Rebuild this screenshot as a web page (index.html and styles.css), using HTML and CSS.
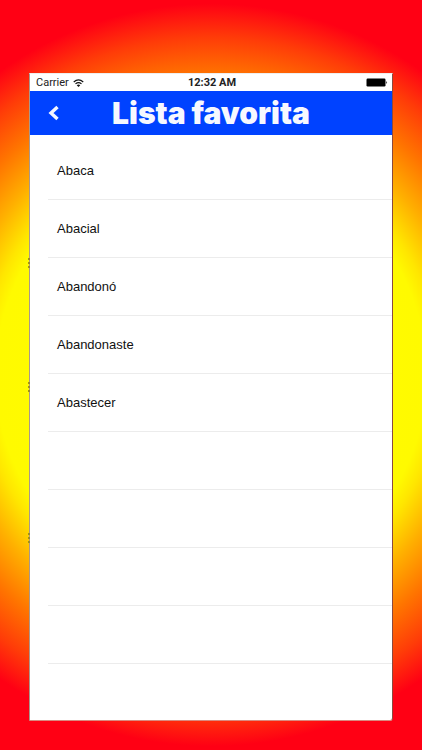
FILE: index.html
```html
<!DOCTYPE html>
<html lang="es">
<head>
  <meta charset="UTF-8">
  <meta name="viewport" content="width=device-width, initial-scale=1.0">
  <title>Lista favorita</title>
  <link rel="stylesheet" href="styles.css">
</head>
<body>

  <div class="screen">
    <div class="status">
      <div class="carrier">
        <span>Carrier</span>
        <svg class="wifi" width="11" height="8" viewBox="0 0 22 16" aria-hidden="true">
          <path d="M1.5 6 Q11 -2.5 20.5 6 M5 9.8 Q11 4.6 17 9.8" fill="none" stroke="#111" stroke-width="2.4"/>
          <path d="M7.5 12.4 Q11 9.8 14.5 12.4 L11 16 Z" fill="#111"/>
        </svg>
      </div>
      <div class="clock">12:32 AM</div>
      <svg class="battery" width="22" height="9" viewBox="0 0 22 9" aria-hidden="true">
        <rect x="0.5" y="0.5" width="19" height="8" rx="1.2" fill="#000"/>
        <path d="M20.3 3 Q22 4.5 20.3 6 Z" fill="#000"/>
      </svg>
    </div>

    <header class="header">
      <button class="back" type="button" aria-label="Volver">
        <svg width="12" height="16" viewBox="0 0 12 16" aria-hidden="true">
          <path d="M9.5 2 L3 8 L9.5 14" fill="none" stroke="#f4f6ff" stroke-width="3.4"/>
        </svg>
      </button>
      <h1 class="title">Lista favorita</h1>
    </header>

    <ul class="list">
      <li>Abaca</li>
      <li>Abacial</li>
      <li>Abandonó</li>
      <li>Abandonaste</li>
      <li>Abastecer</li>
      <li></li>
      <li></li>
      <li></li>
      <li></li>
    </ul>
  </div>

</body>
</html>
```
FILE: styles.css
```css
* {
  box-sizing: border-box;
}
body {
  margin: 0;
  min-height: 100vh;
  padding: 73px 29px 29px;
  display: flex;
  font-family: "Liberation Sans", Arial, sans-serif;
  background: radial-gradient(88% 50% at 50% 50%, #ffff00 0%, #fffa00 58%, #ffe600 62%, #ffb000 70%, #ff7400 80%, #ff3c08 90%, #ff0014 99%);
}
.screen {
  position: relative;
  flex: 1;
  background: #fff;
  border: 1px solid #a9978c;
  border-top-color: #eee;
  border-right-color: #8a4a40;
  border-bottom-color: #d98a80;
  border-radius: 0 0 3px 1px;
}
/* dotted marks on the left edge */
.screen::before {
  content: "";
  position: absolute;
  left: -2px;
  top: 184px;
  width: 2px;
  height: 286px;
  background:
    repeating-linear-gradient(#a08c20 0 2px, transparent 2px 4px) 0 0 / 2px 10px no-repeat,
    repeating-linear-gradient(#a08c20 0 2px, transparent 2px 4px) 0 124px / 2px 10px no-repeat,
    repeating-linear-gradient(#a08c20 0 2px, transparent 2px 4px) 0 275px / 2px 10px no-repeat;
}
.status {
  display: grid;
  grid-template-columns: 1fr auto 1fr;
  align-items: center;
  height: 17px;
  padding: 0 4px 0 6px;
  font-family: Roboto, Arial, sans-serif;
  font-size: 11px;
  color: #222;
}
.carrier {
  display: flex;
  align-items: center;
  gap: 4px;
}
.clock {
  font-weight: bold;
}
.battery {
  justify-self: end;
}
.header {
  display: grid;
  grid-template-columns: 48px 1fr 48px;
  align-items: center;
  height: 44px;
  background: #0042ff;
}
.back {
  display: flex;
  justify-content: center;
  padding: 8px;
  background: none;
  border: none;
  cursor: pointer;
}
.title {
  margin: 0;
  font-family: Inter, "Arial Black", sans-serif;
  font-size: 30px;
  font-weight: 900;
  line-height: 42px;
  text-align: center;
  white-space: nowrap;
  color: #f6f8ff;
}
.list {
  list-style: none;
  margin: 0;
  padding: 7px 0 0 18px;
}
.list li {
  height: 58px;
  padding-left: 9px;
  border-bottom: 1px solid #ececec;
  font-size: 13px;
  line-height: 57px;
  color: #111;
}
```
